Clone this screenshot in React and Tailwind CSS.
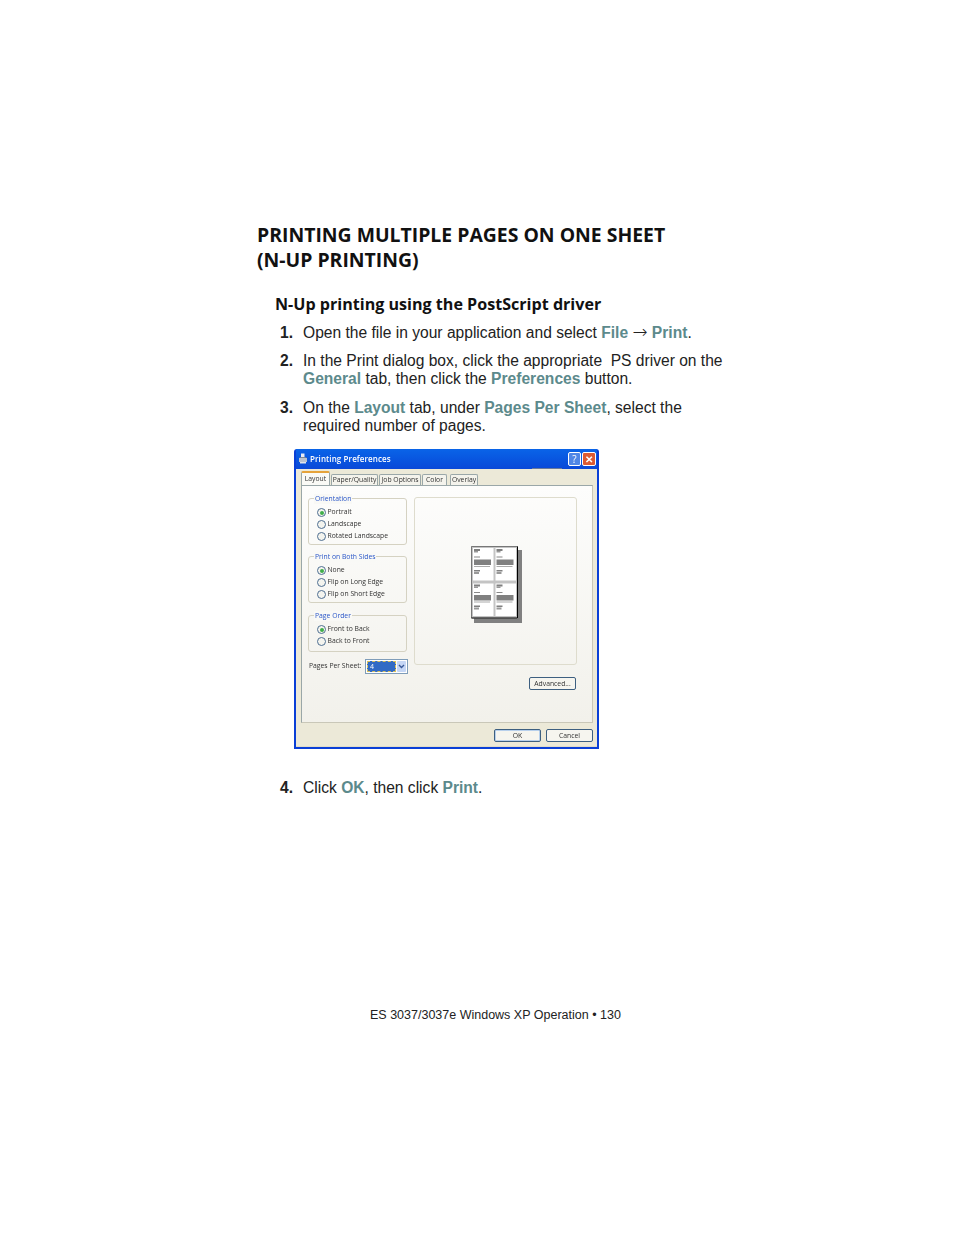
const body = "font-['Liberation_Sans',Arial,sans-serif]";
const ui = "font-['Open_Sans','Liberation_Sans',sans-serif]";

function Em({ children }) {
    return <span className="font-bold text-[#5c8a8c]">{children}</span>;
}

function Step({ n, className, children }) {
    return (
        <div className={`flex pl-[280px] w-[780px] text-[15.6px] leading-[18.5px] text-[#222] ${body} ${className}`}>
            <span className="w-[23px] font-bold">{n}</span>
            <div className="flex-1">{children}</div>
        </div>
    );
}

function Radio({ label, checked }) {
    return (
        <div className="flex items-center h-[12px] text-[6.8px] text-[#333]">
            <span className="w-[9px] h-[9px] rounded-full border border-[#4f6f92] bg-[#f4f4ee] flex items-center justify-center mr-[1.5px]">
                {checked && <span className="w-[4px] h-[4px] rounded-full bg-[#3fae4a]"></span>}
            </span>
            <span>{label}</span>
        </div>
    );
}

function Group({ title, className, children }) {
    return (
        <div className={`relative w-[99px] border border-[#d5d2c2] rounded-[3px] pl-[8px] pt-[8px] ${className}`}>
            <span className="absolute -top-[5px] left-[5px] px-[1px] bg-[#f9f9f6] text-[6.8px] leading-[10px] text-[#2a56c8]">{title}</span>
            {children}
        </div>
    );
}

function Tab({ label, active, className }) {
    if (active) {
        return (
            <div className={`h-[14px] -mt-[2px] bg-[#fafaf6] border border-b-0 border-[#9aa7a8] border-t-2 border-t-[#e6a33a] rounded-t-[2px] text-[6.8px] leading-[11px] text-center text-[#333] ${className}`}>
                {label}
            </div>
        );
    }
    return (
        <div className={`h-[11px] bg-[#f4f3ec] border border-b-0 border-[#9aa7a8] rounded-t-[2px] text-[6.8px] leading-[10px] text-center text-[#333] ${className}`}>
            {label}
        </div>
    );
}

function Btn({ label, className }) {
    return (
        <div className={`w-[47px] h-[13px] bg-[#f6f5ef] border border-[#3d5f80] rounded-[2px] text-[6.8px] leading-[11px] text-center text-[#333] ${className}`}>
            {label}
        </div>
    );
}

function Cell({ x, y }) {
    return (
        <g transform={`translate(${x} ${y})`}>
            <rect width="20.5" height="32.5" fill="#fff" />
            <rect x="1" y="1" width="6" height="2" fill="#808080" />
            <rect x="1" y="3" width="4" height="1.5" fill="#999" />
            <rect x="1" y="8.5" width="6" height="1" fill="#888" />
            <rect x="1" y="11.5" width="17" height="5.5" fill="#808080" />
            <rect x="1" y="18" width="16" height="1" fill="#aaa" />
            <rect x="1" y="22" width="6" height="1.5" fill="#808080" />
            <rect x="1" y="24" width="5" height="2" fill="#999" />
        </g>
    );
}

function Sheet() {
    return (
        <svg width="51" height="77" viewBox="0 0 51 77">
            <rect x="3" y="4" width="48" height="73" fill="#808080" />
            <rect x="0" y="0" width="47" height="72.5" fill="#c4c4c4" />
            <path d="M0.5 72V0.5H46.5" fill="none" stroke="#777" />
            <path d="M46.5 0.5V72H0.5" fill="none" stroke="#000" />
            <Cell x={2} y={2} />
            <Cell x={24.5} y={2} />
            <Cell x={2} y={37.5} />
            <Cell x={24.5} y={37.5} />
        </svg>
    );
}

function PrinterIcon() {
    return (
        <svg width="10" height="11" viewBox="0 0 10 11">
            <rect x="3" y="0.5" width="3.5" height="4" fill="#e8ecf4" />
            <path d="M1 5h8v4H1z" fill="#b9c2cf" />
            <path d="M2 9h6v1.5H2z" fill="#dfe4ec" />
            <path d="M1 5l2-1h4l2 1" fill="#7d8794" />
        </svg>
    );
}

function Dialog() {
    return (
        <div className={`w-[305px] h-[300px] ml-[294px] mt-[13px] bg-[#0a3fd6] rounded-t-[3px] p-[2px] pt-0 flex flex-col ${ui} blur-[0.35px]`}>
            <div className="relative h-[20px] shrink-0 flex items-center bg-gradient-to-b from-[#0a64e8] to-[#0a48d8] pl-[2px] pr-[1px]">
                <PrinterIcon />
                <span className="ml-[2px] text-[8px] font-semibold text-white tracking-[0.1px]">Printing Preferences</span>
                <div className="ml-auto flex gap-[1px]">
                    <div className="w-[13px] h-[14px] rounded-[2px] bg-[#4f86e6] border border-white text-white text-[10px] leading-[12px] text-center">?</div>
                    <div className="w-[14px] h-[14px] rounded-[2px] bg-[#dc5a32] border border-white text-white text-[10px] leading-[12px] text-center font-bold">✕</div>
                </div>
                <div className="absolute left-[236px] bottom-0 w-[30px] h-[1px] bg-[#6a7a9a]"></div>
            </div>
            <div className="flex-1 bg-[#ece9d8] pt-[4px] pl-[5px] pr-[3px] flex flex-col border-b border-[#e0dcc8]">
                <div className="flex h-[12px] items-end">
                    <Tab label="Layout" active className="w-[29px]" />
                    <Tab label="Paper/Quality" className="w-[47px] ml-[1px]" />
                    <Tab label="Job Options" className="w-[42px] ml-[1px]" />
                    <Tab label="Color" className="w-[25px] ml-[1px]" />
                    <Tab label="Overlay" className="w-[28px] ml-[3px]" />
                </div>
                <div className="h-[238px] w-[292px] border border-[#9aa7a8] border-r-[#c9c7b8] border-b-[#c9c7b8] bg-gradient-to-b from-[#fdfdfc] to-[#f2f1eb] pt-[12px] pl-[6px] flex flex-col">
                    <div className="flex">
                        <div className="w-[105px]">
                            <Group title="Orientation" className="h-[47px]">
                                <Radio label="Portrait" checked />
                                <Radio label="Landscape" />
                                <Radio label="Rotated Landscape" />
                            </Group>
                            <Group title="Print on Both Sides" className="h-[47px] mt-[11px]">
                                <Radio label="None" checked />
                                <Radio label="Flip on Long Edge" />
                                <Radio label="Flip on Short Edge" />
                            </Group>
                            <Group title="Page Order" className="h-[37px] mt-[12px]">
                                <Radio label="Front to Back" checked />
                                <Radio label="Back to Front" />
                            </Group>
                            <div className="flex items-center h-[16px] mt-[7px] text-[6.8px] text-[#333]">
                                <span className="w-[57px] shrink-0 pl-[1px]">Pages Per Sheet:</span>
                                <div className="flex items-center w-[43px] shrink-0 h-[15px] border border-[#7f9db9] bg-white p-[1px]">
                                    <div className="w-[29px] h-[11px] bg-[#316ac5] border border-dashed border-[#d8c060] text-white text-[7px] leading-[9px] pl-[2px]">4</div>
                                    <div className="ml-[1px] flex-1 h-[11px] bg-[#c5d6f5] rounded-[1px] flex items-center justify-center">
                                        <svg width="7" height="5" viewBox="0 0 7 5"><path d="M1 1l2.5 2.5L6 1" fill="none" stroke="#3a5a98" strokeWidth="1.4" /></svg>
                                    </div>
                                </div>
                            </div>
                        </div>
                        <div className="ml-[1px] -mt-[1px] flex flex-col items-end">
                            <div className="w-[163px] h-[168px] border border-[#dedccd] rounded-[3px] flex items-start justify-start pt-[48px] pl-[56px]">
                                <Sheet />
                            </div>
                            <Btn label="Advanced..." className="mt-[12px] mr-[1px]" />
                        </div>
                    </div>
                </div>
                <div className="flex justify-end gap-[5px] mt-[6px] pr-[1px]">
                    <Btn label="OK" className="border-[#2c5a8c] shadow-[inset_0_0_0_1px_#b8d0ec]" />
                    <Btn label="Cancel" />
                </div>
            </div>
        </div>
    );
}

export default function App() {
    return (
        <div className="relative w-[954px] h-[1235px] bg-white overflow-hidden pt-[222px]">
            <h1 className="pl-[257px] font-['Open_Sans',sans-serif] font-bold text-[19.4px] leading-[25px] text-[#111]">
                PRINTING MULTIPLE PAGES ON ONE SHEET<br />(N-UP PRINTING)
            </h1>
            <h2 className="pl-[275px] mt-[20px] font-['Open_Sans',sans-serif] font-bold text-[16.1px] leading-[24px] text-[#111]">
                N-Up printing using the PostScript driver
            </h2>
            <Step n="1." className="mt-[8px]">
                Open the file in your application and select <Em>File</Em> <span className="font-['DejaVu_Sans',sans-serif] text-[18px] leading-[0] font-light">→</span> <Em>Print</Em>.
            </Step>
            <Step n="2." className="mt-[9px]">
                In the Print dialog box, click the appropriate&nbsp; PS driver on the<br />
                <Em>General</Em> tab, then click the <Em>Preferences</Em> button.
            </Step>
            <Step n="3." className="mt-[10px]">
                On the <Em>Layout</Em> tab, under <Em>Pages Per Sheet</Em>, select the<br />
                required number of pages.
            </Step>
            <Dialog />
            <Step n="4." className="mt-[30px]">
                Click <Em>OK</Em>, then click <Em>Print</Em>.
            </Step>
            <p className={`${body} mt-[210px] w-[954px] pl-[370px] text-[12.5px] leading-[16px] text-[#222]`}>
                ES 3037/3037e Windows XP Operation • 130
            </p>
        </div>
    );
}
